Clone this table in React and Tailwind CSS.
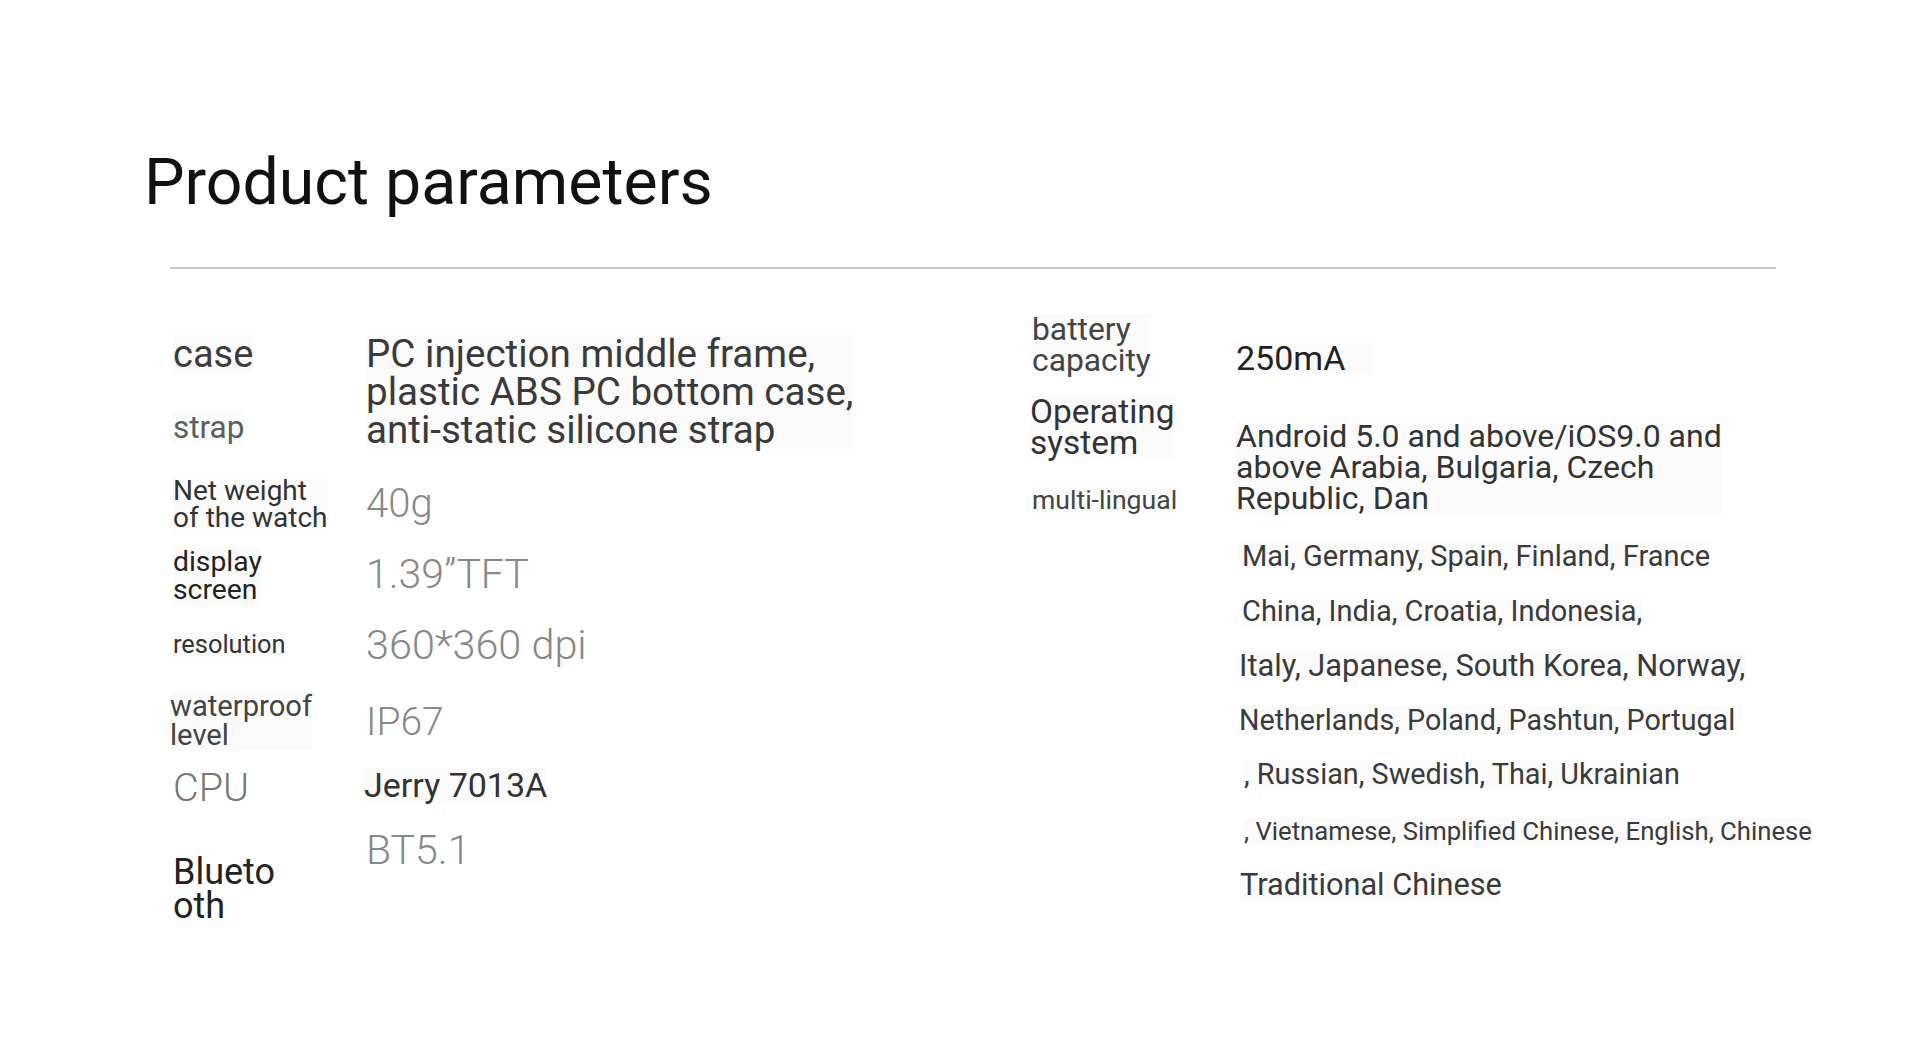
const leftRows = [
  {
    h: 'h-[142px]',
    label: (
      <>
        <div className="w-fit bg-[#fbfbfb] text-[38px] leading-[38px] text-[#3d3d3d]">case</div>
        <div className="mt-[39px] w-fit bg-[#fbfbfb] text-[31.5px] leading-[31px] text-[#5a605c]">strap</div>
      </>
    ),
    value: (
      <div className="w-fit bg-[#fbfbfb] text-[38.6px] leading-[38px] text-[#3a3a3a]">
        PC injection middle frame,
        <br />
        plastic ABS PC bottom case,
        <br />
        anti-static silicone strap
      </div>
    ),
  },
  {
    h: 'h-[71px]',
    label: (
      <div className="w-fit bg-[#fbfbfb] text-[28px] leading-[27px] text-[#333]">
        Net weight
        <br />
        of the watch
      </div>
    ),
    value: <div className="pt-[7px] text-[40px] leading-[39px] font-light text-[#888]">40g</div>,
  },
  {
    h: 'h-[77px]',
    label: (
      <div className="w-fit bg-[#fbfbfb] text-[28.3px] leading-[28px] text-[#222]">
        display
        <br />
        screen
      </div>
    ),
    value: <div className="pt-[6px] text-[41px] leading-[40px] font-light text-[#888]">1.39”TFT</div>,
  },
  {
    h: 'h-[67px]',
    label: <div className="mt-[7px] w-fit bg-[#fbfbfb] text-[25.4px] leading-[25px] text-[#333]">resolution</div>,
    value: <div className="text-[41.4px] leading-[40px] font-light text-[#888]">360*360 dpi</div>,
  },
  {
    h: 'h-[76px]',
    label: (
      <div className="-ml-[3px] w-fit bg-[#fbfbfb] text-[29.2px] leading-[29px] text-[#444]">
        waterproof
        <br />
        level
      </div>
    ),
    value: <div className="pt-[11px] text-[39px] leading-[38px] font-light text-[#888]">IP67</div>,
  },
  {
    h: 'h-[63px]',
    label: <div className="pt-[1px] text-[39.5px] leading-[38px] font-light text-[#777]">CPU</div>,
    value: <div className="-ml-[2px] w-fit bg-[#fbfbfb] text-[34px] leading-[34px] text-[#333]">Jerry 7013A</div>,
  },
  {
    h: '',
    label: (
      <div className="pt-[24px] text-[36px] leading-[34px] text-[#222]">
        Blueto
        <br />
        oth
      </div>
    ),
    value: <div className="text-[41px] leading-[38px] font-light text-[#888]">BT5.1</div>,
  },
];

const languages = [
  { text: 'Mai, Germany, Spain, Finland, France', cls: 'mt-[28px] ml-[6px] text-[29px] leading-[29px]' },
  { text: 'China, India, Croatia, Indonesia,', cls: 'mt-[26px] ml-[6px] text-[29px] leading-[29px]' },
  { text: 'Italy, Japanese, South Korea, Norway,', cls: 'mt-[25px] ml-[3px] text-[30.8px] leading-[29px]' },
  { text: 'Netherlands, Poland, Pashtun, Portugal', cls: 'mt-[26px] ml-[3px] text-[28.7px] leading-[29px]' },
  { text: ', Russian, Swedish, Thai, Ukrainian', cls: 'mt-[25px] ml-[8px] text-[28.8px] leading-[29px]' },
  { text: ', Vietnamese, Simplified Chinese, English, Chinese', cls: 'mt-[29px] ml-[8px] text-[25.7px] leading-[26px]' },
  { text: 'Traditional Chinese', cls: 'mt-[26px] ml-[4px] text-[30.7px] leading-[30px]' },
];

function App() {
  return (
    <div className="min-h-[1037px] w-full bg-white font-['Roboto','Liberation_Sans',sans-serif]">
      <h1 className="ml-[144px] w-fit pt-[150px] text-[64.4px] leading-[64px] font-normal text-[#111]">
        Product parameters
      </h1>

      <div className="ml-[170px] mt-[53px] h-[2px] w-[1606px] bg-[#c6c6c6]" />

      <div className="flex pl-[173px]">
        {/* left table */}
        <div className="w-[859px] pt-[66px]">
          {leftRows.map((row, i) => (
            <div key={i} className={`flex ${row.h}`}>
              <div className="w-[193px] shrink-0 whitespace-nowrap">{row.label}</div>
              <div className="whitespace-nowrap">{row.value}</div>
            </div>
          ))}
        </div>

        {/* right table */}
        <div className="pt-[45px] whitespace-nowrap">
          <div className="flex h-[82px]">
            <div className="w-[204px] shrink-0">
              <div className="w-fit bg-[#fbfbfb] text-[31.8px] leading-[31px] text-[#444]">
                battery
                <br />
                capacity
              </div>
            </div>
            <div className="mt-[27px] h-fit bg-[#fbfbfb] pr-[30px] text-[34px] leading-[34px] text-[#222]">250mA</div>
          </div>

          <div className="flex">
            <div className="w-[204px] shrink-0">
              <div className="-ml-[2px] w-fit bg-[#fbfbfb] text-[33.4px] leading-[31px] text-[#333]">
                Operating
                <br />
                system
              </div>
              <div className="mt-[29px] w-fit bg-[#fbfbfb] text-[26.6px] leading-[26px] text-[#444]">multi-lingual</div>
            </div>
            <div className="flex flex-col text-[#3a3a3a]">
              <div className="mt-[25px] w-fit bg-[#fbfbfb] text-[32px] leading-[31px] text-[#333]">
                Android 5.0 and above/iOS9.0 and
                <br />
                above Arabia, Bulgaria, Czech
                <br />
                Republic, Dan
              </div>
              {languages.map((l) => (
                <div key={l.text} className={`w-fit bg-[#fbfbfb] ${l.cls}`}>
                  {l.text}
                </div>
              ))}
            </div>
          </div>
        </div>
      </div>
    </div>
  );
}

export default App;
